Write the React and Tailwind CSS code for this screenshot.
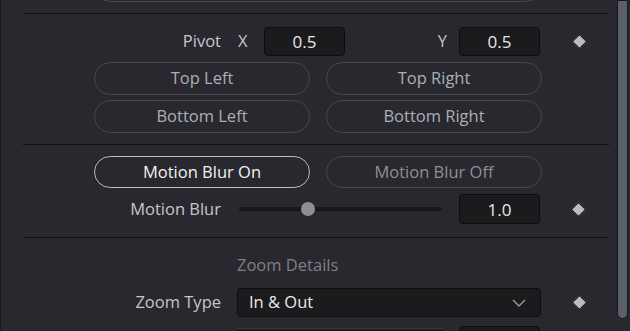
import React from 'react'

function Diamond() {
  return (
    <div className="flex-1 flex items-center justify-center">
      <div className="w-[11px] h-[11px] rotate-45 bg-[#bcbcbc] border border-[#111113]" />
    </div>
  )
}

function Field({ value, className = '' }) {
  return (
    <div className={`h-[29px] w-[81px] rounded-[4px] bg-[#1b1b1d] border border-[#0d0d0f] flex items-center justify-center text-[17px] text-[#e8e8e8] ${className}`}>
      {value}
    </div>
  )
}

function Pill({ children, active }) {
  return (
    <button
      className={`w-[216px] h-full rounded-full flex items-center justify-center text-[16.5px] ${
        active
          ? 'border-[1.5px] border-[#b9b9bb] text-[#f2f2f2]'
          : 'border border-[#47484e] text-[#a9b0b7]'
      }`}
    >
      {children}
    </button>
  )
}

function Separator({ className = '' }) {
  return <div className={`h-px ml-[22px] w-[586px] bg-[#0f0f11] ${className}`} />
}

function Label({ children }) {
  return <div className="w-[220px] text-right text-[16.5px] text-[#c3c7cc] shrink-0">{children}</div>
}

export default function App() {
  return (
    <div className="w-[630px] h-[331px] overflow-hidden bg-[#28282e] flex font-['Open_Sans',sans-serif] leading-none">
      <div className="w-px bg-[#1c1c20] shrink-0" />

      <div className="w-[616px] flex flex-col shrink-0 *:shrink-0">
        {/* leftover button from section above */}
        <div className="h-[33px] mt-[-31px] pl-[93px] flex">
          <div className="w-[448px] h-full rounded-full border border-[#47484e]" />
        </div>

        <Separator className="mt-[11px]" />

        {/* Pivot */}
        <div className="mt-[13px] h-[29px] flex items-center">
          <Label>Pivot</Label>
          <div className="ml-[16px] w-[304px] flex items-center">
            <span className="w-[27px] pl-[1px] text-[16.5px] text-[#c3c7cc]">X</span>
            <Field value="0.5" />
            <span className="w-[114px] pr-[12px] text-right text-[16.5px] text-[#c3c7cc]">Y</span>
            <Field value="0.5" />
          </div>
          <Diamond />
        </div>

        <div className="mt-[6px] h-[33px] pl-[93px] flex gap-[16px]">
          <Pill>Top Left</Pill>
          <Pill>Top Right</Pill>
        </div>
        <div className="mt-[5px] h-[33px] pl-[93px] flex gap-[16px]">
          <Pill>Bottom Left</Pill>
          <Pill>Bottom Right</Pill>
        </div>

        <Separator className="mt-[11px]" />

        {/* Motion blur */}
        <div className="mt-[11px] h-[32px] pl-[93px] flex gap-[16px]">
          <Pill active>Motion Blur On</Pill>
          <button className="w-[216px] h-full rounded-full border border-[#47484e] flex items-center justify-center text-[16.5px] text-[#8c9097]">
            Motion Blur Off
          </button>
        </div>

        <div className="mt-[6px] h-[30px] flex items-center">
          <Label>Motion Blur</Label>
          <div className="ml-[18px] w-[203px] h-[14px] relative flex items-center">
            <div className="w-full h-[4px] rounded-full bg-[#18181a]" />
            <div className="absolute left-[62px] top-0 w-[14px] h-[14px] rounded-full bg-[#8f8f91]" />
          </div>
          <div className="ml-[17px]">
            <Field value="1.0" className="h-[30px]" />
          </div>
          <Diamond />
        </div>

        <Separator className="mt-[13px]" />

        {/* Zoom details */}
        <div className="mt-[17px] h-[20px] flex items-center pl-[236px] text-[16.5px] text-[#7d8087]">
          Zoom Details
        </div>

        <div className="mt-[13px] h-[29px] flex items-center">
          <Label>Zoom Type</Label>
          <div className="ml-[16px] w-[304px] h-full rounded-[4px] bg-[#1b1b1d] border border-[#0d0d0f] flex items-center pl-[11px] pr-[14px]">
            <span className="flex-1 text-[16.5px] text-[#ececec]">In &amp; Out</span>
            <svg width="14" height="8" viewBox="0 0 14 8" fill="none">
              <path d="M1 1l6 6 6-6" stroke="#9a9b9e" strokeWidth="1.4" />
            </svg>
          </div>
          <Diamond />
        </div>

        <div className="mt-[9px] h-[29px] flex">
          <div className="w-[220px] shrink-0" />
          <div className="ml-[16px] mt-[2px] w-[206px] h-[27px] rounded-t-[2px] bg-[#1b1b1d] border-t border-[#3a3a3e]" />
          <div className="ml-[16px]">
            <Field value="" />
          </div>
        </div>
      </div>

      {/* scrollbar */}
      <div className="w-[13px] shrink-0 flex">
        <div className="w-[11px] h-[319px] bg-[#5c6068] border border-[#18181b] rounded-b-full" />
      </div>
    </div>
  )
}
